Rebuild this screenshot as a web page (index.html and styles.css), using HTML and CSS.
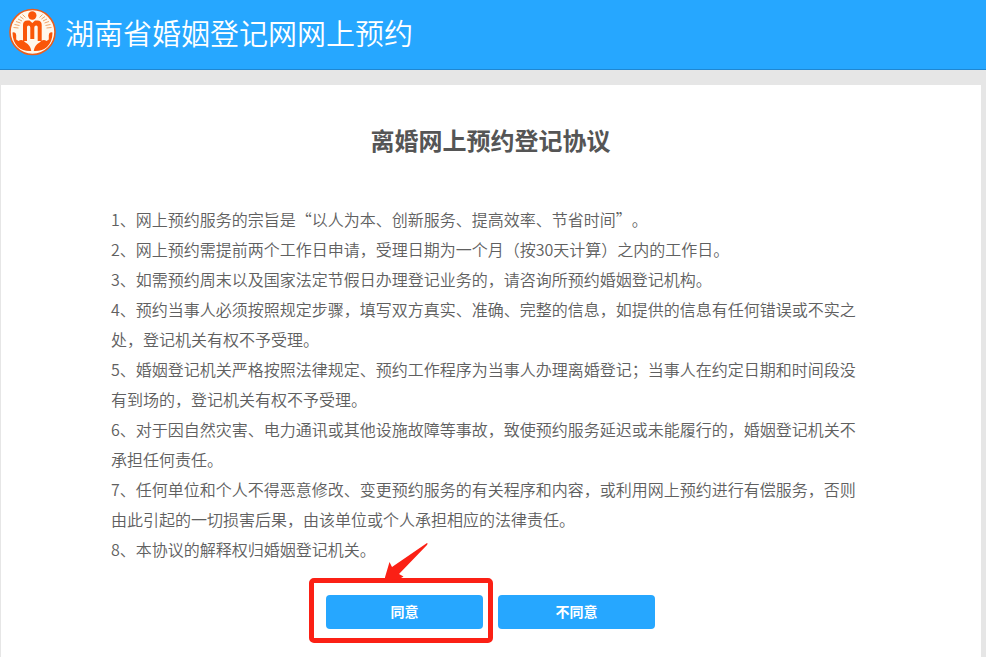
FILE: index.html
```html
<!DOCTYPE html>
<html lang="zh-CN">
  <head>
    <meta charset="utf-8">
    <meta name="viewport" content="width=device-width, initial-scale=1">
    <title>湖南省婚姻登记网网上预约</title>
    <link rel="stylesheet" href="styles.css">
  </head>
  <body>
    <header class="header">
      <svg class="logo" viewBox="0 0 48 48" aria-hidden="true">
        <circle cx="23.500" cy="24" r="22.500" fill="#fff8ec" stroke="#ea5d1c" stroke-width="1.600"/>
        <!-- rays -->
        <g stroke="#f0a468" stroke-width="1">
          <path d="M4.500 19.500l5 .500M5.500 16.500l5 1M7 13.500l4.500 1.500M9 11l4 2M11 8.500l3.500 2.500M13.500 6.500l3 3"/>
          <path d="M42.500 19.500l-5 .500M41.500 16.500l-5 1M40 13.500l-4.500 1.500M38 11l-4 2M36 8.500l-3.500 2.500M33.500 6.500l-3 3"/>
        </g>
        <g fill="#fa5608">
          <circle cx="23.300" cy="7.500" r="4.200"/>
          <!-- figure -->
          <path d="M14 33V17Q14 12.500 18.500 12.500H20.500L23.300 15 26 12.500H28.500Q32.700 12.500 32.700 17V33H28.700V19Q28.700 17.500 27.200 17.500 25.300 17.500 25.300 19.500V31H21.300V19.500Q21.300 17.500 19.500 17.500 18 17.500 18 19V33z"/>
          <!-- hands -->
          <path d="M3.500 24.500Q7 23.500 7.200 27V31.500L9.500 33Q13 30.500 16.500 34.500 21.500 37 22.300 43Q14 43.500 9 39 3.500 33.500 3.500 24.500z"/>
          <path d="M43.500 24.500Q40 23.500 39.800 27V31.500L37.500 33Q34 30.500 30.500 34.500 25.500 37 24.700 43 33 43.500 38 39 43.500 33.500 43.500 24.500z"/>
        </g>
      </svg>
      <span class="site-name">湖南省婚姻登记网网上预约</span>
    </header>

    <main class="panel">
      <h1>离婚网上预约登记协议</h1>

      <div class="terms">
        <p>1、网上预约服务的宗旨是“以人为本、创新服务、提高效率、节省时间”。</p>
        <p>2、网上预约需提前两个工作日申请，受理日期为一个月（按30天计算）之内的工作日。</p>
        <p>3、如需预约周末以及国家法定节假日办理登记业务的，请咨询所预约婚姻登记机构。</p>
        <p>4、预约当事人必须按照规定步骤，填写双方真实、准确、完整的信息，如提供的信息有任何错误或不实之处，登记机关有权不予受理。</p>
        <p>5、婚姻登记机关严格按照法律规定、预约工作程序为当事人办理离婚登记；当事人在约定日期和时间段没有到场的，登记机关有权不予受理。</p>
        <p>6、对于因自然灾害、电力通讯或其他设施故障等事故，致使预约服务延迟或未能履行的，婚姻登记机关不承担任何责任。</p>
        <p>7、任何单位和个人不得恶意修改、变更预约服务的有关程序和内容，或利用网上预约进行有偿服务，否则由此引起的一切损害后果，由该单位或个人承担相应的法律责任。</p>
        <p>8、本协议的解释权归婚姻登记机关。</p>
      </div>

      <div class="actions">
        <div class="marked">
          <button type="button" class="btn">同意</button>
          <span class="mark-box"></span>
          <svg class="mark-arrow" viewBox="0 0 44 38" aria-hidden="true">
            <path d="M42 0Q43 0 42 2L14 31l4.500 2.500-5 3L-1 37.500 4.500 19l2.500 5z" fill="#fb2015"/>
          </svg>
        </div>
        <button type="button" class="btn">不同意</button>
      </div>
    </main>
  </body>
</html>
```
FILE: styles.css
```css
body {
    margin: 0;
    background-color: #e6e6e6;
    color: #555;
    font-family: "Noto Sans CJK SC", sans-serif;
    font-size: 16px;
    font-weight: 350;
    text-spacing-trim: space-all;
}

/* Top bar */
.header {
    display: flex;
    align-items: center;
    gap: 8px;
    box-sizing: border-box;
    height: 70px;
    padding: 0 9px 6px;
    background-color: #26a7ff;
    border-bottom: 1px solid #1f87d2;
}

.logo {
    width: 48px;
    height: 48px;
}

.site-name {
    color: #fff;
    font-size: 29px;
    line-height: 40px;
}

/* Agreement */
.panel {
    margin: 15px 5px 0 1px;
    padding: 35px 111px 40px 110px;
    background-color: #fff;
}

h1 {
    margin: 0 0 44px;
    font-size: 24px;
    font-weight: bold;
    line-height: 40px;
    text-align: center;
}

.terms {
    color: #606060;
}

.terms p {
    margin: 0;
    line-height: 30px;
}

/* Buttons */
.actions {
    display: flex;
    justify-content: center;
    gap: 15px;
    margin-top: 31px;
}

.marked {
    position: relative;
}

.btn {
    display: block;
    width: 157px;
    height: 34px;
    padding: 0 0 2px;
    border: 0;
    border-radius: 4px;
    background-color: #26a7ff;
    color: #fff;
    font-family: inherit;
    font-size: 14px;
    font-weight: bold;
    cursor: pointer;
}

/* Red marker drawn round the agree button */
.mark-box {
    position: absolute;
    inset: -17px -10px -14px -17px;
    border: 5px solid #fb2015;
    border-radius: 5px;
    pointer-events: none;
}

.mark-arrow {
    position: absolute;
    left: 59px;
    bottom: 48px;
    width: 44px;
    height: 38px;
    pointer-events: none;
}
```
